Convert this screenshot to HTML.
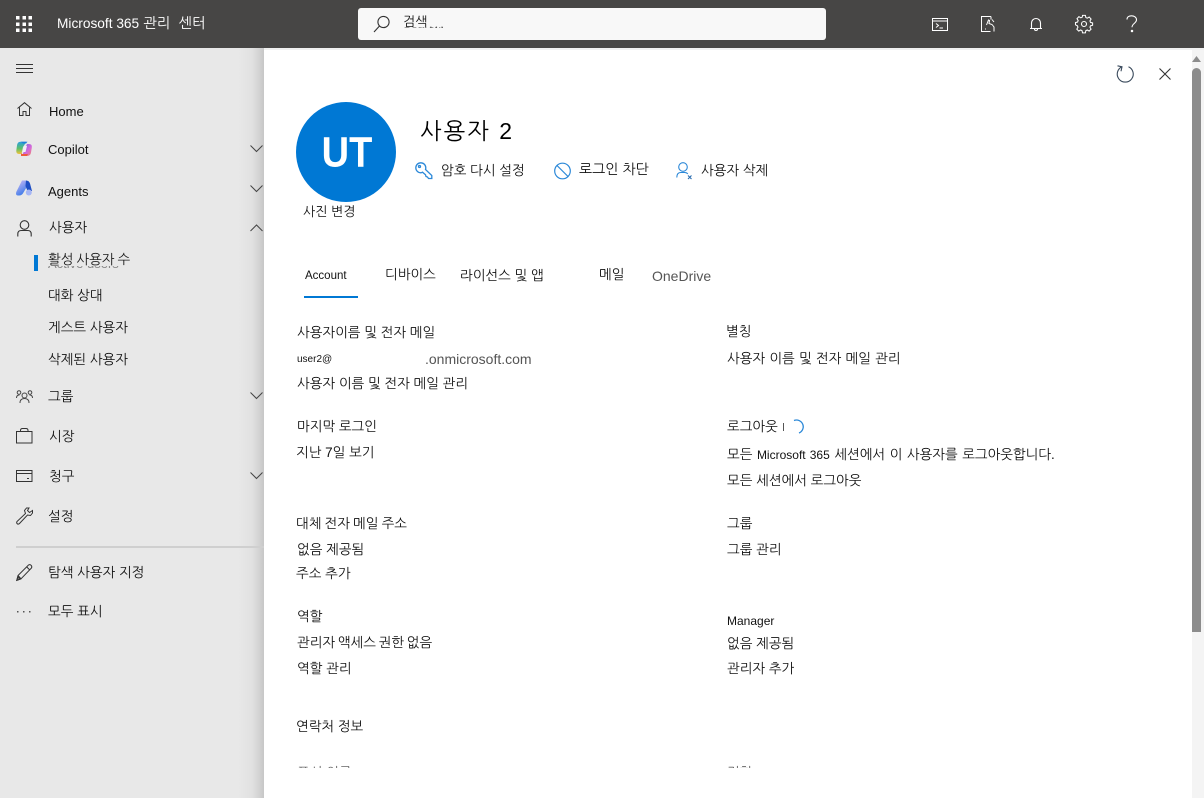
<!DOCTYPE html>
<html lang="ko"><head><meta charset="utf-8"><title>Microsoft 365 관리 센터</title>
<style>
html,body{margin:0;padding:0;width:1204px;height:798px;overflow:hidden;background:#e8e8e8}
body{position:relative;font-family:"Liberation Sans","NanumGothic","Noto Sans CJK KR",sans-serif;font-size:13.5px;color:#111}
.t{position:absolute;white-space:nowrap;line-height:18px;height:18px}
.m{margin-top:1px}
.s{font-size:13.5px}
svg{position:absolute;overflow:visible}
#top{position:absolute;left:0;top:0;width:1204px;height:48px;background:#474645}
#panel{position:absolute;left:264px;top:50px;width:940px;height:748px;background:#fff}
#shadow{position:absolute;left:238px;top:48px;width:26px;height:750px;background:linear-gradient(90deg,rgba(0,0,0,0),rgba(0,0,0,.03) 55%,rgba(0,0,0,.14))}
.sb{position:absolute;background:#8c8c8c}
</style></head><body>
<div id="top"></div>
<div id="shadow"></div>
<div id="panel"></div>
<div style="position:absolute;left:264px;top:48px;width:940px;height:2px;background:#f0f0f0"></div>

<!-- waffle -->
<svg style="left:16px;top:16px" width="16" height="16" fill="#fff"><rect x="0" y="0" width="3.500" height="3.500"/><rect x="6.500" y="0" width="3.500" height="3.500"/><rect x="12.500" y="0" width="3.500" height="3.500"/><rect x="0" y="6.500" width="3.500" height="3.500"/><rect x="6.500" y="6.500" width="3.500" height="3.500"/><rect x="12.500" y="6.500" width="3.500" height="3.500"/><rect x="0" y="12.500" width="3.500" height="3.500"/><rect x="6.500" y="12.500" width="3.500" height="3.500"/><rect x="12.500" y="12.500" width="3.500" height="3.500"/></svg>
<div class="t" style="left:57px;top:15px;color:#fff;font-size:14.500px"><span style="font-size:13.700px">Microsoft 365</span> 관리 <span style="margin-left:4px">센터</span></div>

<!-- search -->
<div style="position:absolute;left:358px;top:8px;width:468px;height:32px;background:#f8f8f8;border-radius:3px"></div>
<svg style="left:373px;top:15px" width="18" height="18" fill="none" stroke="#333" stroke-width="1.100"><circle cx="10.500" cy="7" r="5.600"/><path d="M6.500 11 1 17"/></svg>
<div class="t" style="left:403px;top:27px;height:3px;line-height:3px;width:40px;font-size:12px;color:#8a8a8a;overflow:hidden"><span style="position:relative;top:-4px">Search...</span></div>
<div class="t" style="left:403px;top:13px;font-size:13px;color:#111">검색</div>
<div class="t" style="left:429px;top:15px;font-size:13px;color:#555;letter-spacing:2px">...</div>

<!-- top right icons -->
<svg style="left:932px;top:18px" width="16" height="13" fill="none" stroke="#fff" stroke-width="1"><rect x=".5" y=".5" width="15" height="12"/><path d="M.5 3h15M4 5.500l2.500 2-2.500 2M7.500 10H11"/></svg>
<svg style="left:981px;top:16px" width="15" height="16" fill="none" stroke="#fff" stroke-width="1"><path d="M10 .5H.5v15h9M10 .5v3M4 13h1"/><path d="M5.500 9 7.500 4l1 .5-.5 3 3 1 2 2.500v4.500M11 3.500l2 2.500"/></svg>
<svg style="left:1029px;top:17px" width="14" height="15" fill="none" stroke="#fff" stroke-width="1.100"><path d="M1 11.500h12M2.500 11.500V6a4.500 4.500 0 0 1 9 0v5.500M5.500 12a1.500 1.500 0 0 0 3 0"/></svg>
<svg style="left:1075px;top:15px" width="18" height="18" viewBox="0 0 18 18" fill="none" stroke="#fff" stroke-width="1.100"><circle cx="9" cy="9" r="2.500"/><path d="M7.500.8h3l.5 2.300 1.500.7 2-1.200 2 2.100-1.200 2 .6 1.500 2.200.6v2.400l-2.200.6-.6 1.500 1.200 2-2 2.100-2-1.200-1.500.7-.5 2.300h-3l-.5-2.300-1.500-.7-2 1.200-2-2.100 1.200-2-.6-1.500L.1 10.800V8.400l2.200-.6.6-1.500-1.200-2 2-2.100 2 1.200 1.500-.7Z" transform="translate(.4 -.4) scale(.95)"/></svg>
<svg style="left:1126px;top:15px" width="12" height="18" fill="none" stroke="#fff" stroke-width="1.100"><path d="M1 4.500C1 2 3 .8 5.500.8S10.500 2.300 10.500 4.800c0 3.500-4.500 3.700-4.500 7.500"/><circle cx="6" cy="16" r=".7" fill="#fff"/></svg>

<!-- sidebar -->
<svg style="left:16px;top:64px" width="17" height="10" stroke="#333" stroke-width="1"><path d="M0 .5h17M0 4.500h17M0 8.500h17"/></svg>

<svg style="left:17px;top:102px" width="15" height="14" fill="none" stroke="#333" stroke-width="1"><path d="M.5 6.500 7.500.7l7 5.800M2.500 5.500v8h3.500v-4h3v4h3.500v-8"/></svg>
<div class="t" style="left:49px;top:103px;font-size:13px">Home</div>

<svg style="left:16px;top:141px" width="16" height="16" viewBox="0 0 16 16"><defs><linearGradient id="c1" x1="0" x2="0" y1="0" y2="1"><stop offset="0" stop-color="#2a9fe0"/><stop offset=".55" stop-color="#5cc06a"/><stop offset="1" stop-color="#f4c23a"/></linearGradient><linearGradient id="c2" x1="0" x2="1" y1="0" y2="1"><stop offset="0" stop-color="#7a5fe8"/><stop offset=".6" stop-color="#d86ad8"/><stop offset="1" stop-color="#f08a5a"/></linearGradient></defs><path d="M4.500 .8h6L7 6 5.500 13H3Q0 13 .3 9.500L1 4.500Q1.500.8 4.500.8Z" fill="url(#c1)"/><path d="M11 3h2Q16.300 3 15.800 6.500L15 11.500Q14.500 15 11 15H6Z" fill="url(#c2)"/><path d="M5 .8h6.500L10 2.500H7Z" fill="#1f7fd8"/><path d="M5 15h6l1-2H6L5 12Z" fill="#ee5a3c"/><path d="M7.800 5H11L9.500 11H6.500Z" fill="#f3eef8"/></svg>
<div class="t" style="left:48px;top:141px;font-size:13px">Copilot</div>
<svg style="left:250px;top:145px" width="13" height="8" fill="none" stroke="#444"><path d="M.5.500l6 6 6-6"/></svg>

<svg style="left:16px;top:180px" width="16" height="16" viewBox="0 0 16 16"><defs><linearGradient id="a1" x1="0" x2=".5" y1="0" y2="1"><stop offset="0" stop-color="#d0bdf8"/><stop offset="1" stop-color="#3f7be8"/></linearGradient></defs><path d="M6 .5h5v6L7.500 12.500Q6 15.500 3 15.500H2Q0 15.500 0 13.500 0 12 1 10.500Z" fill="url(#a1)"/><path d="M10 .5Q13 .5 14 3.500L16 11H11.500L9.500 6Z" fill="#1f4fc4"/><circle cx="12.800" cy="12.500" r="3" fill="#a6b6f5"/></svg>
<div class="t" style="left:48px;top:183px;font-size:13px">Agents</div>
<svg style="left:250px;top:185px" width="13" height="8" fill="none" stroke="#444"><path d="M.5.500l6 6 6-6"/></svg>

<svg style="left:17px;top:220px" width="15" height="17" fill="none" stroke="#333" stroke-width="1.100"><circle cx="7.500" cy="5" r="4.300"/><path d="M.8 16.500V14q0-3.500 3.500-3.500h6.400q3.500 0 3.500 3.500v2.500"/></svg>
<div class="t s" style="left:49px;top:219px">사용자</div>
<svg style="left:250px;top:224px" width="13" height="8" fill="none" stroke="#444"><path d="M.5 7l6-6 6 6"/></svg>

<div style="position:absolute;left:34px;top:255px;width:4px;height:16px;background:#0078d4"></div>
<div class="t" style="left:48px;top:266px;height:4px;line-height:4px;overflow:hidden;font-size:13px;color:#888"><span style="position:relative;top:-4px">Active users</span></div>
<div class="t s" style="left:48px;top:251px;color:#1a1a1a;word-spacing:-.7px">활성 사용자 수</div>
<div class="t s" style="left:48px;top:287px">대화 상대</div>
<div class="t s" style="left:48px;top:319px">게스트 사용자</div>
<div class="t s" style="left:48px;top:351px">삭제된 사용자</div>

<svg style="left:16px;top:390px" width="17" height="14" fill="none" stroke="#444" stroke-width="1"><circle cx="3" cy="2.500" r="1.800"/><circle cx="14" cy="2.500" r="1.800"/><circle cx="8.500" cy="5.500" r="2.500"/><path d="M.5 8c0-2 1-3 3-3M16.500 8c0-2-1-3-3-3M4 13c0-3 1.500-4.500 4.500-4.500S13 10 13 13"/></svg>
<div class="t s" style="left:48px;top:388px">그룹</div>
<svg style="left:250px;top:392px" width="13" height="8" fill="none" stroke="#444"><path d="M.5.500l6 6 6-6"/></svg>

<svg style="left:16px;top:428px" width="17" height="16" fill="none" stroke="#333" stroke-width="1"><rect x=".5" y="3.500" width="15.500" height="11.500"/><path d="M4.500 3.500V2.500q0-2 2-2h3.500q2 0 2 2v1"/></svg>
<div class="t s" style="left:49px;top:428px">시장</div>

<svg style="left:16px;top:470px" width="17" height="12" fill="none" stroke="#333" stroke-width="1"><rect x=".5" y=".5" width="15.500" height="11"/><path d="M.5 3.500h15.500M11 8.500h2"/></svg>
<div class="t s" style="left:49px;top:468px">청구</div>
<svg style="left:250px;top:472px" width="13" height="8" fill="none" stroke="#444"><path d="M.5.500l6 6 6-6"/></svg>

<svg style="left:16px;top:507px" width="17" height="18" fill="none" stroke="#333" stroke-width="1"><path d="M10.500 1 8.500 3.500 9.500 6.500 1 14.500q-.8 1.500.3 2.300 1 .8 2.200-.3L11.500 8l3 .5 2-2.500V3.500L13.500 5.500 11.500 3.500 13 1Z"/></svg>
<div class="t s" style="left:48px;top:508px">설정</div>

<div style="position:absolute;left:16px;top:546px;width:248px;height:2px;background:#cfcfcf"></div>

<svg style="left:16px;top:564px" width="17" height="17" fill="none" stroke="#333" stroke-width="1"><path d="M.8 16.300 2 11.500 12.500 1q1.300-.800 2.500.2 1.300 1.300.500 2.800L5 14.800ZM2 11.500 5 14.800M10.800 3 13.800 6"/><path d="M.8 16.300 2 12.500 4.500 15Z" fill="#777"/></svg>
<div class="t s" style="left:48px;top:564px">탐색 사용자 지정</div>

<svg style="left:17px;top:611px" width="14" height="2" fill="#555"><rect x="0" width="1.500" height="1.500"/><rect x="6" width="1.500" height="1.500"/><rect x="12" width="1.500" height="1.500"/></svg>
<div class="t s" style="left:48px;top:603px">모두 표시</div>

<!-- panel controls -->
<svg style="left:1116px;top:65px" width="18" height="18" fill="none" stroke="#3a4a5c" stroke-width="1.100"><path d="M6 1.800A8 8 0 1 0 12.500 1.800"/><path d="M1.500 .8 6 1.800 5 6.200"/></svg>
<svg style="left:1159px;top:68px" width="12" height="12" fill="none" stroke="#333" stroke-width="1.100"><path d="M.5.500l11 11M11.500.500l-11 11"/></svg>
<div style="position:absolute;left:1192px;top:50px;width:12px;height:748px;background:#f4f4f4"></div>
<svg style="left:1192px;top:56px" width="9" height="6" fill="#8c8c8c"><path d="M4.500 0 9 6H0Z"/></svg>
<div class="sb" style="left:1192px;top:68px;width:9px;height:564px;border-radius:4.500px 4.500px 0 0"></div>

<!-- header -->
<div style="position:absolute;left:296px;top:102px;width:100px;height:100px;border-radius:50%;background:#0078d4"></div>
<div style="position:absolute;left:297px;top:102px;width:100px;height:100px;line-height:103px;text-align:center;color:#fff;font-size:38px;font-weight:700;transform:scaleY(1.120)">UT</div>
<div class="t" style="left:303px;top:203px;font-size:13px">사진 변경</div>
<div class="t" style="left:420px;top:116px;font-size:23px;line-height:30px;height:30px;color:#000;letter-spacing:2px">사용자 2</div>

<svg style="left:415px;top:162px" width="18" height="18" fill="none" stroke="#2b88d8" stroke-width="1.300"><path d="M5.800 .8a5 5 0 0 1 5 5q0 1-.3 1.700l6.300 6v3h-3.300l-1-1.500-1.500-.5-.5-1.800-3-2.500q-1 .6-1.700.6a5 5 0 0 1 0-10Z"/><circle cx="4.500" cy="4.500" r="1"/></svg>
<div class="t" style="left:441px;top:162px">암호 다시 설정</div>
<svg style="left:554px;top:162px" width="17" height="18" fill="none" stroke="#2b88d8" stroke-width="1.200"><circle cx="8.500" cy="9" r="7.800"/><path d="M3 3.500 14 14.500"/></svg>
<div class="t" style="left:579px;top:160px;font-size:14px">로그인 차단</div>
<svg style="left:676px;top:162px" width="18" height="18" fill="none" stroke="#2b88d8" stroke-width="1.100"><circle cx="7" cy="5" r="4.300"/><path d="M.8 15.500q0-5 4-5h4q2 0 3 1.500"/><path d="M12 13.500l3.500 3.500M15.500 13.500l-3.500 3.500" stroke="#2a6db0"/></svg>
<div class="t" style="left:701px;top:162px">사용자 삭제</div>

<!-- tabs -->
<div class="t" style="left:305px;top:267px;font-size:11.500px">Account</div>
<div style="position:absolute;left:304px;top:296px;width:54px;height:2px;background:#0078d4"></div>
<div class="t" style="left:385px;top:266px">디바이스</div>
<div class="t" style="left:460px;top:267px">라이선스 및 앱</div>
<div class="t" style="left:599px;top:266px">메일</div>
<div class="t" style="left:652px;top:267px;font-size:14px;color:#555">OneDrive</div>

<!-- left column -->
<div class="t m" style="left:297px;top:323px">사용자이름 및 전자 메일</div>
<div class="t m" style="left:297px;top:350px;font-size:10px">user2@</div>
<div class="t m" style="left:425px;top:349px;font-size:14px;color:#555">.onmicrosoft.com</div>
<div class="t m" style="left:297px;top:374px">사용자 이름 및 전자 메일 관리</div>
<div class="t m" style="left:297px;top:417px">마지막 로그인</div>
<div class="t m" style="left:296px;top:443px">지난 7일 보기</div>
<div class="t m" style="left:296px;top:514px;word-spacing:-.6px">대체 전자 메일 주소</div>
<div class="t m" style="left:297px;top:540px">없음 제공됨</div>
<div class="t m" style="left:296px;top:564px">주소 추가</div>
<div class="t m" style="left:297px;top:607px">역할</div>
<div class="t m" style="left:297px;top:633px;word-spacing:-1px">관리자 액세스 권한 없음</div>
<div class="t m" style="left:297px;top:659px">역할 관리</div>
<div class="t m" style="left:296px;top:717px">연락처 정보</div>
<div class="t" style="left:297px;top:764px;height:4px;overflow:hidden;color:#666">표시 이름</div>

<!-- right column -->
<div class="t" style="left:726px;top:323px">별칭</div>
<div class="t m" style="left:727px;top:349px;word-spacing:.5px">사용자 이름 및 전자 메일 관리</div>
<div class="t m" style="left:727px;top:417px">로그아웃</div>
<div style="position:absolute;left:783px;top:423px;width:1px;height:8px;background:#555"></div>
<svg style="left:790px;top:419px" width="16" height="16" fill="none" stroke="#2b88d8" stroke-width="1.300"><path d="M4 1.500A6.500 6.500 0 0 1 9 14"/></svg>
<div class="t" style="left:727px;top:446px;word-spacing:.8px">모든 <span style="font-size:12px">Microsoft 365</span> 세션에서 이 사용자를 로그아웃합니다.</div>
<div class="t m" style="left:727px;top:471px">모든 세션에서 로그아웃</div>
<div class="t m" style="left:727px;top:514px">그룹</div>
<div class="t m" style="left:727px;top:540px">그룹 관리</div>
<div class="t" style="left:727px;top:612px;font-size:12px">Manager</div>
<div class="t m" style="left:727px;top:634px">없음 제공됨</div>
<div class="t m" style="left:727px;top:659px">관리자 추가</div>
<div class="t" style="left:727px;top:764px;height:4px;overflow:hidden;color:#666">전화</div>
</body></html>
